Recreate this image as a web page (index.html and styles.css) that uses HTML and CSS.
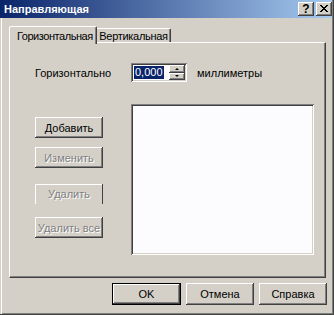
FILE: index.html
```html
<!DOCTYPE html>
<html lang="ru">
<head>
<meta charset="utf-8">
<title>Направляющая</title>
<link rel="stylesheet" href="styles.css">
</head>
<body>
<div class="window">
  <div class="titlebar">
    <span class="title">Направляющая</span>
    <span class="tbtn help">?</span>
    <span class="tbtn close">
      <svg width="8" height="7" viewBox="0 0 8 7"><path d="M0 0h2v1h1v1h2v-1h1v-1h2v1h-1v1h-1v1h-1v1h1v1h1v1h1v1h-2v-1h-1v-1h-2v1h-1v1h-2v-1h1v-1h1v-1h1v-1h-1v-1h-1v-1h-1z" fill="#000"/></svg>
    </span>
  </div>
  <div class="client">
    <div class="tabs">
      <div class="tab active">Горизонтальная</div>
      <div class="tab">Вертикальная</div>
    </div>
    <div class="panel">
      <div class="row-value">
        <span class="label">Горизонтально</span>
        <div class="spin">
          <span class="spin-text"><span class="sel">0,000</span></span>
          <div class="spin-btns">
            <span class="sbtn"><span class="arr up"></span></span>
            <span class="sbtn"><span class="arr down"></span></span>
          </div>
        </div>
        <span class="units">миллиметры</span>
      </div>
      <div class="row-list">
        <div class="btn-col">
          <div class="btn b-add">Добавить</div>
          <div class="btn disabled b-edit">Изменить</div>
          <div class="btn disabled b-del">Удалить</div>
          <div class="btn disabled b-delall">Удалить все</div>
        </div>
        <div class="listbox"></div>
      </div>
    </div>
    <div class="footer">
      <div class="btn default">OK</div>
      <div class="btn">Отмена</div>
      <div class="btn">Справка</div>
    </div>
  </div>
</div>
</body>
</html>
```
FILE: styles.css
```css
body {
  margin: 0;
  background: #d4d0c8;
  font-family: "Liberation Sans", Arial, sans-serif;
  font-size: 11px;
  color: #000;
}
.window {
  width: 334px;
  height: 315px;
  box-sizing: border-box;
  border-right: 1px solid #404040;
  border-bottom: 1px solid #404040;
  box-shadow: inset 1px 0 #d4d0c8, inset 2px 0 #fff, inset -1px -1px #808080;
  display: flex;
  flex-direction: column;
}
.titlebar {
  height: 18px;
  margin-right: 1px;
  background: linear-gradient(to right, #0a246a, #a6caf0);
  display: flex;
  align-items: center;
  padding-left: 4px;
  padding-right: 0;
}
.title {
  flex: 1;
  color: #fff;
  font-weight: bold;
  font-size: 11px;
}
.tbtn {
  width: 16px;
  height: 14px;
  box-sizing: border-box;
  background: #d4d0c8;
  box-shadow: inset -1px -1px #404040, inset 1px 1px #fff, inset -2px -2px #808080;
  display: flex;
  align-items: center;
  justify-content: center;
  font-weight: bold;
  font-size: 12px;
  line-height: 1;
}
.help {
  margin-right: 2px;
  padding-bottom: 1px;
}
.close svg {
  display: block;
  margin-top: -1px;
}
.client {
  flex: 1;
  display: flex;
  flex-direction: column;
  padding: 8px 6px 0 9px;
}
.tabs {
  display: flex;
  align-items: flex-end;
  height: 16px;
}
.tab {
  width: 74px;
  height: 14px;
  box-sizing: border-box;
  padding: 1px 0 0 0;
  border-top: 1px solid #fff;
  border-right: 1px solid #404040;
  box-shadow: inset -1px 0 #808080;
  border-radius: 0 2px 0 0;
  line-height: 12px;
  text-align: center;
  letter-spacing: -0.3px;
  white-space: nowrap;
  overflow: hidden;
}
.tab.active {
  position: relative;
  z-index: 1;
  height: 18px;
  margin-bottom: -2px;
  width: 88px;
  padding: 3px 0 0 7px;
  text-align: left;
  letter-spacing: -0.45px;
  border-left: 1px solid #fff;
  border-radius: 2px 2px 0 0;
  background: #d4d0c8;
}
.panel {
  width: 317px;
  height: 236px;
  box-sizing: border-box;
  border-top: 1px solid #fff;
  border-left: 1px solid #fff;
  border-right: 1px solid #404040;
  border-bottom: 1px solid #404040;
  box-shadow: inset -1px -1px #808080;
  padding: 20px 0 0 25px;
  display: flex;
  flex-direction: column;
}
.row-value {
  display: flex;
  align-items: center;
  height: 19px;
}
.label {
  width: 96px;
}
.spin {
  width: 56px;
  height: 19px;
  box-sizing: border-box;
  background: #fff;
  box-shadow: inset 1px 1px #808080, inset -1px -1px #fff, inset 2px 2px #404040, inset -2px -2px #d4d0c8;
  padding: 2px;
  display: flex;
  align-items: center;
}
.spin-text {
  flex: 1;
  padding-left: 1px;
  display: flex;
}
.sel {
  background: #0a246a;
  color: #fff;
  height: 13px;
  line-height: 13px;
  padding: 0 1px;
}
.spin-btns {
  width: 16px;
  height: 15px;
  display: flex;
  flex-direction: column;
}
.sbtn {
  flex: 1;
  background: #d4d0c8;
  box-shadow: inset -1px -1px #404040, inset 1px 1px #fff, inset -2px -2px #808080;
  display: flex;
  align-items: center;
  justify-content: center;
}
.arr {
  width: 0;
  height: 0;
  border-left: 2px solid transparent;
  border-right: 2px solid transparent;
}
.arr.up {
  border-bottom: 2px solid #000;
}
.arr.down {
  border-top: 2px solid #000;
}
.units {
  margin-left: 10px;
}
.row-list {
  display: flex;
  margin-top: 22px;
}
.btn-col {
  width: 68px;
  margin-right: 28px;
  display: flex;
  flex-direction: column;
}
.btn {
  height: 21px;
  box-sizing: border-box;
  background: #d4d0c8;
  box-shadow: inset -1px -1px #404040, inset 1px 1px #fff, inset -2px -2px #808080;
  display: flex;
  align-items: center;
  justify-content: center;
  white-space: nowrap;
}
.btn.disabled {
  color: #808080;
  text-shadow: 1px 1px #fff;
}
.b-add { margin-top: 13px; }
.b-edit { margin-top: 9px; }
.b-del {
  margin-top: 16px;
  height: 20px;
  box-shadow: inset -1px 0 #404040, inset 1px 1px #fff;
}
.b-delall { margin-top: 13px; }
.listbox {
  width: 183px;
  height: 151px;
  box-sizing: border-box;
  background: #fcfcfe;
  box-shadow: inset 1px 1px #808080, inset -1px -1px #fff, inset 2px 2px #404040, inset -2px -2px #d4d0c8;
}
.footer {
  display: flex;
  justify-content: flex-end;
  gap: 5px;
  margin-top: 5px;
}
.footer .btn {
  width: 68px;
  height: 22px;
}
.footer .btn.default {
  width: 69px;
  border: 1px solid #000;
}
```
